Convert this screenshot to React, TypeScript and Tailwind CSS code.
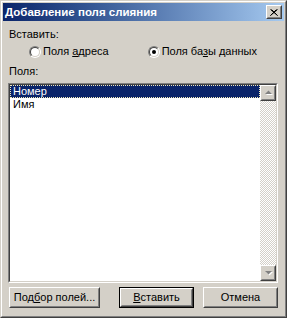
import React from "react";

const FONT = "font-['Liberation_Sans',Arial,sans-serif]";

function Raised({ className = "", children }: { className?: string; children?: React.ReactNode }) {
  return (
    <div className={`border border-t-white border-l-white border-r-[#404040] border-b-[#404040] bg-[#d4d0c8] ${className}`}>
      <div className="w-full h-full border border-t-[#d4d0c8] border-l-[#d4d0c8] border-r-[#808080] border-b-[#808080] flex items-center justify-center">
        {children}
      </div>
    </div>
  );
}

function Radio({ checked }: { checked?: boolean }) {
  return (
    <div className="w-[12px] h-[12px] rounded-full border border-t-[#808080] border-l-[#808080] border-r-white border-b-white">
      <div className="w-full h-full rounded-full border border-t-[#404040] border-l-[#404040] border-r-[#d4d0c8] border-b-[#d4d0c8] bg-white flex items-center justify-center">
        {checked && <div className="w-[4px] h-[4px] rounded-full bg-black" />}
      </div>
    </div>
  );
}

function Arrow({ up }: { up?: boolean }) {
  return (
    <svg width="9" height="6" viewBox="0 0 9 6" aria-hidden="true">
      {up ? (
        <>
          <path d="M2 5h7L5.5 1.5z" fill="#fff" />
          <path d="M1 4h7L4.5 0.5z" fill="#808080" />
        </>
      ) : (
        <>
          <path d="M2 2h7L5.5 5.5z" fill="#fff" />
          <path d="M1 1h7L4.5 4.5z" fill="#808080" />
        </>
      )}
    </svg>
  );
}

function Button({ children, isDefault, className = "" }: { children: React.ReactNode; isDefault?: boolean; className?: string }) {
  if (isDefault) {
    return (
      <div className={`border border-black ${className}`}>
        <Raised className="w-full h-full text-[11px] text-black">{children}</Raised>
      </div>
    );
  }
  return <Raised className={`text-[11px] text-black ${className}`}>{children}</Raised>;
}

export default function App() {
  return (
    <div className={`w-[287px] h-[318px] ${FONT} text-[11px] leading-[13px] text-black`}>
      <div className="w-full h-full border border-t-[#d4d0c8] border-l-[#d4d0c8] border-r-[#404040] border-b-[#404040]">
        <div className="w-full h-full border border-t-white border-l-white border-r-[#808080] border-b-[#808080] bg-[#d4d0c8] p-px flex flex-col">
          {/* title bar */}
          <div className="h-[18px] bg-linear-to-r from-[#0a246a] to-[#a6caf0] flex items-center pl-[2px] pr-[2px]">
            <span className="text-white font-bold text-[11.5px] leading-[14px] flex-1">Добавление поля слияния</span>
            <Raised className="w-[16px] h-[14px]">
              <svg width="8" height="7" viewBox="0 0 8 7" aria-hidden="true">
                <path d="M0.5 0.5L7.5 6.5M7.5 0.5L0.5 6.5M1.5 0.5L7.5 6.5M6.5 0.5L0.5 6.5" stroke="#000" strokeWidth="1" />
              </svg>
            </Raised>
          </div>

          <div className="flex flex-col px-[5px]">
            <div className="mt-[7px] ml-px">Вставить:</div>
            <div className="flex items-center mt-[4px] h-[13px]">
              <div className="ml-[21px]"><Radio /></div>
              <span className="ml-[2px]">Поля <u>а</u>дреса</span>
              <div className="ml-[39px]"><Radio checked /></div>
              <span className="ml-[2px]">Поля ба<u>з</u>ы данных</span>
            </div>
            <div className="mt-[7px] ml-px">Поля:</div>

            {/* list box */}
            <div className="mt-[5px] w-[270px] h-[200px] border border-t-[#808080] border-l-[#808080] border-r-white border-b-white">
              <div className="w-full h-full border border-t-[#404040] border-l-[#404040] border-r-[#d4d0c8] border-b-[#d4d0c8] bg-white flex">
                <div className="flex-1 flex flex-col">
                  <div className="h-[13px] bg-[#0a246a] text-white border border-dotted border-[#f0e8b8] pl-[2px] leading-[11px]">Номер</div>
                  <div className="h-[13px] pl-[3px]">Имя</div>
                </div>
                <div className="w-[16px] flex flex-col bg-[repeating-conic-gradient(#fff_0_25%,#d4d0c8_0_50%)] bg-[length:2px_2px]">
                  <Raised className="w-[16px] h-[16px]"><Arrow up /></Raised>
                  <div className="flex-1" />
                  <Raised className="w-[16px] h-[16px]"><Arrow /></Raised>
                </div>
              </div>
            </div>

            {/* buttons */}
            <div className="flex mt-[4px] h-[21px]">
              <Button className="ml-px w-[91px]"><span>Под<u>б</u>ор полей...</span></Button>
              <Button isDefault className="ml-[19px] w-[75px]"><span><u>В</u>ставить</span></Button>
              <Button className="ml-[9px] w-[75px]">Отмена</Button>
            </div>
          </div>
        </div>
      </div>
    </div>
  );
}
